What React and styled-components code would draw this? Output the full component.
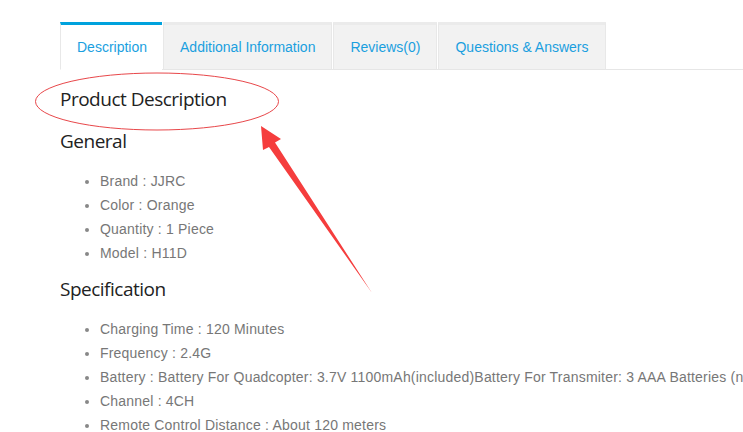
import React from "react";
import styled, { createGlobalStyle } from "styled-components";

const Global = createGlobalStyle`
  html, body { margin: 0; padding: 0; background: #fff; overflow: hidden; }
  body { width: 743px; height: 432px; }
`;

const Page = styled.div`
  position: relative;
  box-sizing: border-box;
  width: 743px;
  height: 432px;
  overflow: hidden;
  padding: 22px 0 0 60px;
  font-family: "Liberation Sans", Arial, sans-serif;
  white-space: nowrap;
`;

const TabBar = styled.div`
  display: flex;
  border-bottom: 1px solid #e6e6e6;
`;

const Tab = styled.div`
  box-sizing: border-box;
  height: 48px;
  padding: 0 ${(p) => (p.$active ? 15 : 16)}px 0 16px;
  display: flex;
  align-items: center;
  font-size: 14px;
  color: #1a9fdf;
  margin-bottom: -1px;
  margin-right: 1px;
  background: ${(p) => (p.$active ? "#fff" : "#f2f2f2")};
  border: 1px solid #e8e8e8;
  border-top: 3px solid ${(p) => (p.$active ? "#00a2dd" : "#ebebeb")};
  border-bottom: 1px solid ${(p) => (p.$active ? "#fff" : "#e6e6e6")};
  border-right: ${(p) => (p.$active ? "none" : "1px solid #e8e8e8")};
`;

const Content = styled.div`
  padding-top: 15px;
`;

const Heading = styled.h3`
  margin: ${(p) => p.$mt || 0}px 0 0 0;
  font-family: "Open Sans", sans-serif;
  font-weight: 400;
  font-size: 19px;
  letter-spacing: -0.5px;
  line-height: 28px;
  color: #222;
`;

const List = styled.ul`
  margin: 14px 0 0 0;
  padding-left: 40px;
  list-style: disc;
  color: #777;
  font-size: 14px;
  letter-spacing: 0.2px;
  line-height: 24px;
  li::marker { color: #888; font-size: 13px; }
`;

const Overlay = styled.svg`
  position: absolute;
  left: 0;
  top: 0;
  pointer-events: none;
`;

const tabs = ["Description", "Additional Information", "Reviews(0)", "Questions & Answers"];

export default function App() {
  return (
    <>
      <Global />
      <Page>
        <TabBar>
          {tabs.map((t, i) => (
            <Tab key={t} $active={i === 0}>{t}</Tab>
          ))}
        </TabBar>
        <Content>
          <Heading>Product Description</Heading>
          <Heading $mt={14}>General</Heading>
          <List>
            <li>Brand : JJRC</li>
            <li>Color : Orange</li>
            <li>Quantity : 1 Piece</li>
            <li>Model : H11D</li>
          </List>
          <Heading $mt={10}>Specification</Heading>
          <List>
            <li>Charging Time : 120 Minutes</li>
            <li>Frequency : 2.4G</li>
            <li>Battery : Battery For Quadcopter: 3.7V 1100mAh(included)Battery For Transmiter: 3 AAA Batteries (not included)</li>
            <li>Channel : 4CH</li>
            <li>Remote Control Distance : About 120 meters</li>
          </List>
        </Content>
        <Overlay width="743" height="432" viewBox="0 0 743 432">
          <ellipse cx="157" cy="101.5" rx="121.5" ry="28.5" fill="none" stroke="#e8474a" strokeWidth="1" />
          <polygon
            points="261,126 281,139 275,142.5 372,293 269,147 263,150"
            fill="#f53d3d"
          />
        </Overlay>
      </Page>
    </>
  );
}
